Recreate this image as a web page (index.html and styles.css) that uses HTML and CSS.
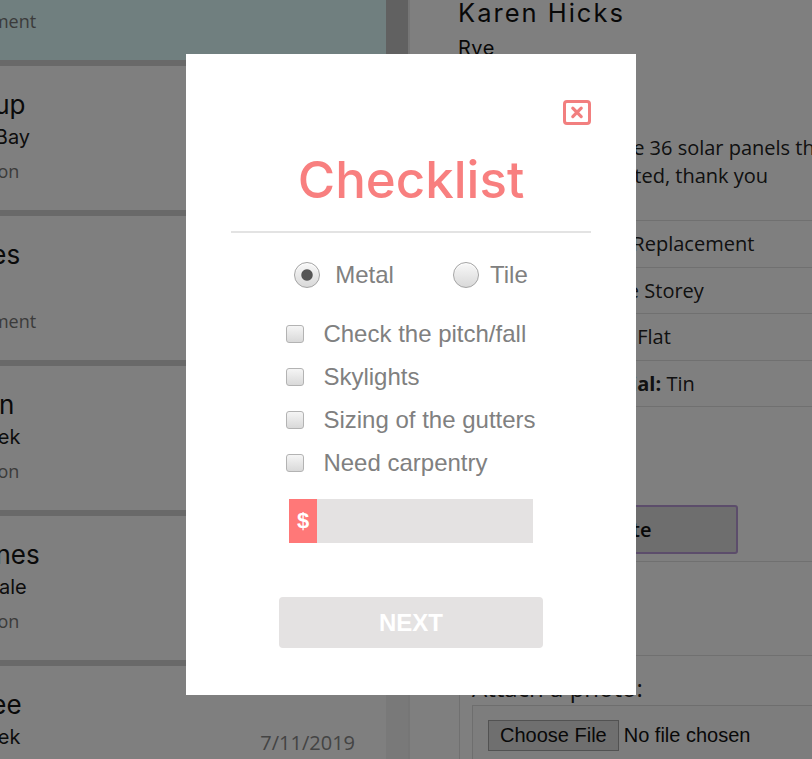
FILE: index.html
```html
<!DOCTYPE html>
<html lang="en">
<head>
<meta charset="utf-8">
<title>Jobs – Checklist</title>
<link rel="stylesheet" href="styles.css">
</head>
<body>
<div class="app">
  <aside class="jobs">
    <div class="job-list">
      <article class="job selected">
        <div class="job-info">
          <div class="job-name">Grace Whitmore</div>
          <div class="job-suburb">Sorrento</div>
          <div class="job-status">Booked Measurement</div>
        </div>
        <div class="job-date">2/11/2019</div>
      </article>
      <article class="job">
        <div class="job-info">
          <div class="job-name">William Kirkup</div>
          <div class="job-suburb">Seaford Beach Bay</div>
          <div class="job-status">Awaiting Installation</div>
        </div>
        <div class="job-date">3/11/2019</div>
      </article>
      <article class="job">
        <div class="job-info">
          <div class="job-name">Olivia Hughes</div>
          <div class="job-suburb">Rye</div>
          <div class="job-status">Booked Measurement</div>
        </div>
        <div class="job-date">4/11/2019</div>
      </article>
      <article class="job">
        <div class="job-info">
          <div class="job-name">Ella Robinson</div>
          <div class="job-suburb">Moorooduc Creek</div>
          <div class="job-status">Awaiting Installation</div>
        </div>
        <div class="job-date">5/11/2019</div>
      </article>
      <article class="job">
        <div class="job-info">
          <div class="job-name">Georgia Barnes</div>
          <div class="job-suburb">Mount Martinsdale</div>
          <div class="job-status">Awaiting Installation</div>
        </div>
        <div class="job-date">6/11/2019</div>
      </article>
      <article class="job">
        <div class="job-info">
          <div class="job-name">Logan McGee</div>
          <div class="job-suburb">Moorooduc Creek</div>
          <div class="job-status">Awaiting Installation</div>
        </div>
        <div class="job-date">7/11/2019</div>
      </article>
    </div>
    <div class="scrollbar"><div class="scroll-thumb"></div></div>
  </aside>

  <main class="detail">
    <h1 class="client">Karen Hicks</h1>
    <p class="client-suburb">Rye</p>
    <p class="client-phone">0412 556 873</p>
    <section class="info">
      <p class="note">Please remove the 36 solar panels that<br>need to be relocated, thank you</p>
      <ul class="facts">
        <li><b>Type of Service:</b> Replacement</li>
        <li><b>Residence:</b> Single Storey</li>
        <li><b>Roof Pitch Type:</b> Flat</li>
        <li><b>Proposed Material:</b> Tin</li>
      </ul>
      <div class="actions"><button class="complete-btn" type="button">Complete</button></div>
      <div class="notes-area"></div>
      <div class="photo">
        <p class="photo-label">Attach a photo:</p>
        <div class="file-box"><span class="file-btn">Choose File</span><span class="file-name">No file chosen</span></div>
      </div>
    </section>
  </main>
</div>

<div class="overlay"></div>

<div class="modal" role="dialog" aria-labelledby="checklist-title">
  <button class="modal-close" type="button" aria-label="Close">
    <svg width="28" height="25" viewBox="0 0 28 25" aria-hidden="true">
      <rect x="1.5" y="1.5" width="25" height="22" rx="2.5" fill="none" stroke="#f27f7f" stroke-width="3"/>
      <path d="M9.8 8.2 L18.2 16.6 M18.2 8.2 L9.8 16.6" stroke="#f27f7f" stroke-width="3.2" stroke-linecap="round"/>
    </svg>
  </button>
  <h2 class="modal-title" id="checklist-title">Checklist</h2>
  <hr class="modal-rule">
  <div class="roof-types">
    <label class="roof-option"><input class="radio" type="radio" name="roof" checked><span class="opt-label opt-metal">Metal</span></label>
    <label class="roof-option opt-tile-wrap"><input class="radio" type="radio" name="roof"><span class="opt-label opt-tile">Tile</span></label>
  </div>
  <ul class="checks">
    <li><label class="check"><input class="checkbox" type="checkbox"><span>Check the pitch/fall</span></label></li>
    <li><label class="check"><input class="checkbox" type="checkbox"><span>Skylights</span></label></li>
    <li><label class="check"><input class="checkbox" type="checkbox"><span>Sizing of the gutters</span></label></li>
    <li><label class="check"><input class="checkbox" type="checkbox"><span>Need carpentry</span></label></li>
  </ul>
  <div class="price">
    <span class="price-sign">$</span>
    <input class="price-input" type="text" aria-label="Price">
  </div>
  <button class="next-btn" type="button">NEXT</button>
</div>
</body>
</html>
```

FILE: styles.css
```css
* { box-sizing: border-box; }

html, body {
  margin: 0;
  padding: 0;
}

body {
  width: 812px;
  height: 759px;
  overflow: hidden;
  background: #fff;
  font-family: "Open Sans", "Liberation Sans", sans-serif;
}

/* ---------- background app ---------- */
.app {
  display: flex;
  margin-left: -170px;
  height: 759px;
  overflow: hidden;
}

.jobs {
  display: flex;
  flex: none;
}

.job-list {
  width: 556px;
  background: #d3d3d3;
  display: flex;
  flex-direction: column;
  gap: 6px;
  margin-top: -84px;
  align-self: flex-start;
}

.job {
  height: 144px;
  background: #fff;
  display: flex;
  justify-content: space-between;
  padding: 23px 31px 0 20px;
}

.job.selected { background: #e0ffff; }

.job-name {
  font: 400 26px/32px "Inter", sans-serif;
  color: #141414;
  white-space: nowrap;
}

.job-suburb {
  font: 400 20px/33px "Inter", sans-serif;
  color: #1a1a1a;
  white-space: nowrap;
}

.job-status {
  font: 400 18px/34px "Open Sans", sans-serif;
  color: #777;
  white-space: nowrap;
}

.job-date {
  margin-top: 40px;
  font: 400 20px/28px "Open Sans", sans-serif;
  color: #888;
}

.scrollbar {
  width: 22px;
  background: #f3f3f3;
}

.scroll-thumb {
  height: 320px;
  background: #c2c2c2;
}

.detail {
  flex: none;
  width: 720px;
  border-left: 2px solid #ececec;
  padding-left: 48px;
}

.client {
  margin: 0;
  font: 400 25.5px/26px "Inter", sans-serif;
  letter-spacing: 2px;
  color: #111;
}

.client-suburb {
  margin: 9px 0 0;
  font: 400 20px/26px "Inter", sans-serif;
  letter-spacing: 0.5px;
  color: #111;
}

.client-phone {
  margin: 0;
  font: 400 18px/34px "Open Sans", sans-serif;
  color: #555;
}

.info {
  margin-left: 1px;
  padding: 39px 0 0 12px;
  border-left: 1px solid #e0e0e0;
}

.note {
  margin: 0;
  font: 400 20px/28px "Open Sans", sans-serif;
  color: #222;
  white-space: nowrap;
}

.facts {
  list-style: none;
  margin: 30px 0 0 -12px;
  padding: 0;
}

.facts li {
  border-top: 1px solid #e0e0e0;
  padding: 9px 0 9px 12px;
  font: 400 20px/27.5px "Open Sans", sans-serif;
  color: #222;
  white-space: nowrap;
}

.facts li:last-child { border-bottom: 1px solid #e0e0e0; }

.facts b { font-weight: 700; }

.actions {
  margin-left: -12px;
  padding: 98px 0 7px 12px;
  border-bottom: 1px solid #e0e0e0;
}

.complete-btn {
  display: block;
  width: 266px;
  height: 49px;
  border: 2px solid #b89bd6;
  border-radius: 3px;
  background: #dcdcdc;
  font: 600 20px/1 "Open Sans", sans-serif;
  color: #111;
}

.notes-area {
  margin-left: -12px;
  height: 94px;
  border-bottom: 1px solid #e0e0e0;
}

.photo { padding-top: 16px; }

.photo-label {
  margin: 0 0 1px;
  font: 400 24px/32px "Open Sans", sans-serif;
  color: #222;
}

.file-box {
  display: flex;
  align-items: flex-start;
  height: 70px;
  padding: 14px 15px;
  border: 1px solid #dcdcdc;
  background: #fafafa;
  font: 400 20px/29px "Liberation Sans", sans-serif;
  color: #111;
}

.file-btn {
  height: 31px;
  padding: 0 11px;
  border: 1px solid #a4a4a4;
  background: #dedede;
  color: #111;
}

.file-name {
  margin-left: 5px;
  line-height: 31px;
}

/* ---------- modal ---------- */
.overlay {
  position: fixed;
  inset: 0;
  background: rgba(0, 0, 0, 0.5);
}

.modal {
  position: fixed;
  top: 54px;
  left: 186px;
  width: 450px;
  height: 641px;
  padding: 46px 45px 47px;
  background: #fff;
  display: flex;
  flex-direction: column;
  align-items: center;
}

.modal-close {
  align-self: flex-end;
  width: 28px;
  height: 25px;
  padding: 0;
  border: 0;
  background: none;
  display: block;
}

.modal-close svg { display: block; }

.modal-title {
  margin: 25px 0 0;
  font: 500 51px/60px "Inter", sans-serif;
  color: #f87f7f;
}

.modal-rule {
  align-self: stretch;
  height: 2px;
  margin: 21px 0 0;
  border: 0;
  background: #e3e3e3;
}

.roof-types {
  display: flex;
  margin-top: 29px;
  height: 26px;
}

.roof-option {
  display: flex;
  align-items: center;
  font: 400 24px/26px "Liberation Sans", sans-serif;
  color: #808080;
}

.opt-tile-wrap { margin-left: 59px; }
.opt-metal { margin-left: 15px; }
.opt-tile { margin-left: 11px; }

.radio {
  appearance: none;
  width: 26px;
  height: 26px;
  margin: 0;
  border-radius: 50%;
  border: 1px solid #a4a4a4;
  background: linear-gradient(#f8f8f8, #d9d9d9);
  box-shadow: inset 0 1px 1px #fff;
}

.radio:checked {
  background: radial-gradient(circle, #555 0 5.2px, transparent 6.2px), linear-gradient(#f8f8f8, #d9d9d9);
}

.checks {
  list-style: none;
  margin: 24.5px 0 0;
  padding: 0;
}

.check {
  display: flex;
  align-items: center;
  height: 43px;
  font: 400 24px/28px "Liberation Sans", sans-serif;
  color: #808080;
}

.checkbox {
  appearance: none;
  width: 18px;
  height: 18px;
  margin: 0 19px 0 0;
  border: 1px solid #b3b3b3;
  border-radius: 3px;
  background: linear-gradient(#f5f5f5, #d9d9d9);
}

.price {
  display: flex;
  width: 244px;
  height: 44px;
  margin-top: 14.5px;
}

.price-sign {
  width: 28px;
  flex: none;
  display: flex;
  align-items: center;
  justify-content: center;
  background: #ff7878;
  color: #fff;
  font: 700 22px/1 "Liberation Sans", sans-serif;
}

.price-input {
  flex: 1;
  min-width: 0;
  border: 0;
  padding: 0 8px;
  background: #e4e2e2;
  font: 400 20px "Liberation Sans", sans-serif;
}

.next-btn {
  width: 264px;
  height: 51px;
  margin-top: 54px;
  border: 0;
  border-radius: 4px;
  background: #e4e2e2;
  color: #fff;
  font: 700 24px/1 "Liberation Sans", sans-serif;
}
```
